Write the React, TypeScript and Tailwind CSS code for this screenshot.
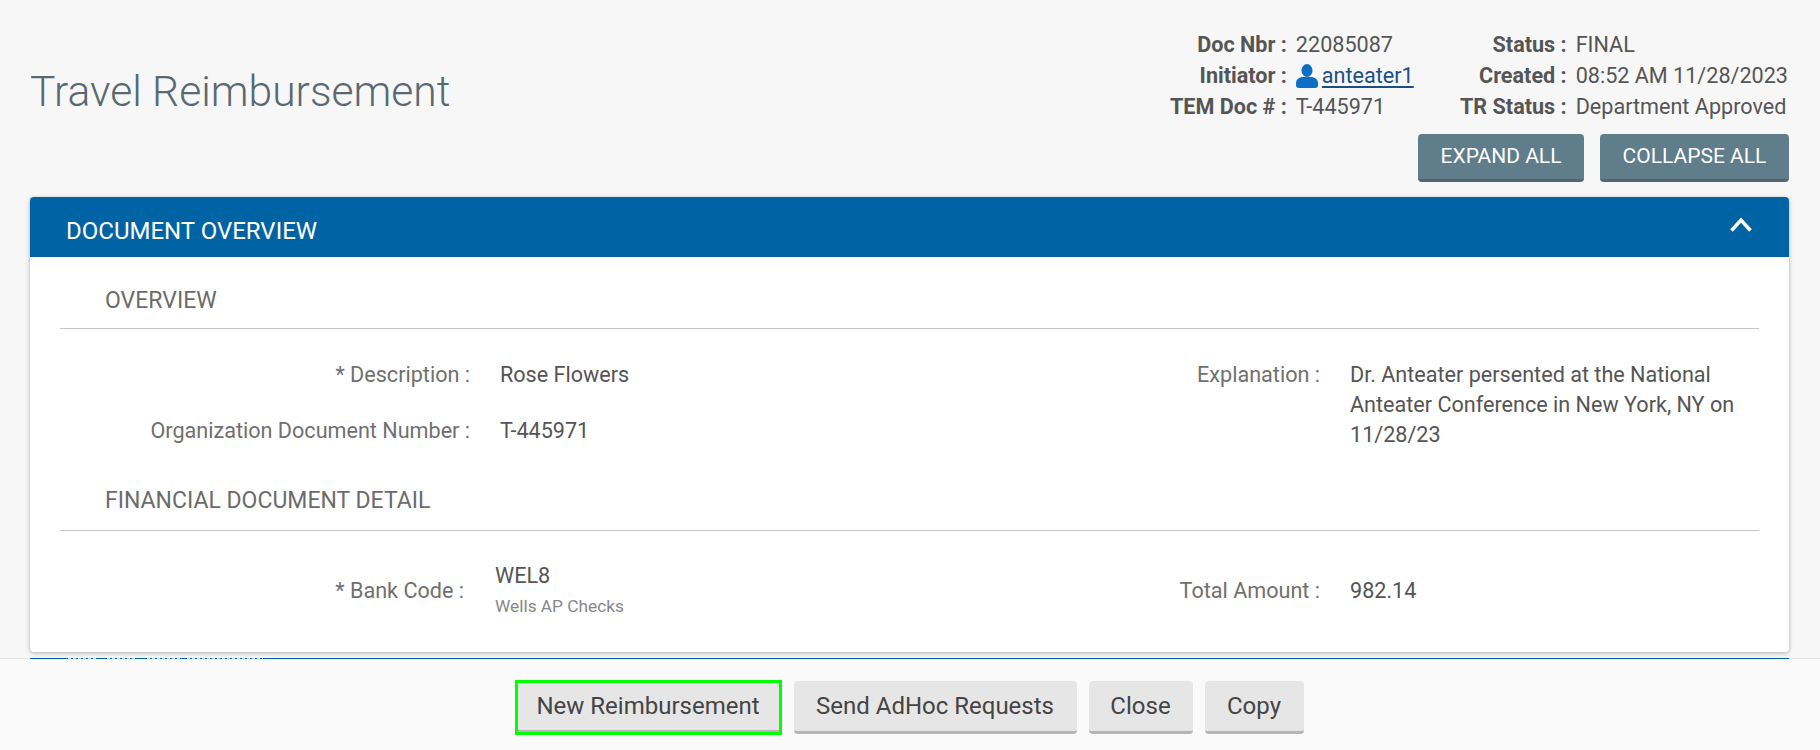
const labelCls = "text-right text-[21.6px] leading-[30px] text-[#707070] whitespace-nowrap"
const valueCls = "text-[21.6px] leading-[30px] text-[#555]"

function PersonIcon() {
  return (
    <svg viewBox="0 0 22 24" className="w-[22px] h-[24px] mr-[4px] shrink-0" fill="#0b70c4">
      <ellipse cx="11" cy="6.5" rx="5.5" ry="6.5" />
      <path d="M0 21v-2c0-4 4-6 7-6h8c3 0 7 2 7 6v2c0 2-1 3-3 3H3c-2 0-3-1-3-3z" />
    </svg>
  )
}

function MetaLabel({ children }: { children: string }) {
  return <div className="text-right font-bold text-[#555] whitespace-nowrap">{children}</div>
}

function SectionHeading({ title, className }: { title: string; className: string }) {
  return (
    <div className={`mx-[30px] flex items-center border-b border-[#c4c4c4] pl-[45px] text-[23px] text-[#6b6b6b] ${className}`}>
      {title}
    </div>
  )
}

function FooterButton({ label, width, focused }: { label: string; width: string; focused?: boolean }) {
  return (
    <button
      className={
        focused
          ? `${width} h-[55px] pb-[3px] bg-[#e6e6e6] border-[3px] border-[#00ff00] shadow-[inset_0_-2px_0_#b5b5b5] text-[24px] text-[#444]`
          : `${width} h-[53px] mt-px rounded-[4px] bg-[#e6e6e6] border-b-[3px] border-[#b5b5b5] text-[24px] text-[#444]`
      }
    >
      {label}
    </button>
  )
}

export default function App() {
  return (
    <div className="w-[1820px] h-[750px] overflow-hidden flex flex-col bg-[#f7f7f7] font-['Roboto',sans-serif]">
      <div className="h-[658px] shrink-0 pl-[30px] pr-[31px] overflow-hidden">
        {/* Page header */}
        <div className="h-[197px] flex justify-between">
          <h1 className="mt-[63px] text-[42.6px] leading-[56px] font-light text-[#5a6872]">Travel Reimbursement</h1>
          <div className="pt-[29px] flex flex-col items-end">
            <div className="flex pr-px text-[21.6px] leading-[31px] text-[#555]">
              <div className="grid grid-cols-[auto_auto] gap-x-[9px] w-[290px] justify-start">
                <MetaLabel>Doc Nbr :</MetaLabel>
                <div>22085087</div>
                <MetaLabel>Initiator :</MetaLabel>
                <div className="flex items-center">
                  <PersonIcon />
                  <a className="underline decoration-[2px] underline-offset-[3px] text-[#1d4f85]">anteater1</a>
                </div>
                <MetaLabel>TEM Doc # :</MetaLabel>
                <div>T-445971</div>
              </div>
              <div className="grid grid-cols-[auto_auto] gap-x-[9px]">
                <MetaLabel>Status :</MetaLabel>
                <div>FINAL</div>
                <MetaLabel>Created :</MetaLabel>
                <div>08:52 AM 11/28/2023</div>
                <MetaLabel>TR Status :</MetaLabel>
                <div>Department Approved</div>
              </div>
            </div>
            <div className="mt-[12px] flex gap-[16px]">
              <button className="h-[48px] w-[166px] pt-px rounded-[4px] bg-[#607d8b] border-b-[3px] border-[#4f6674] text-white text-[21px]">EXPAND ALL</button>
              <button className="h-[48px] w-[189px] pt-px rounded-[4px] bg-[#607d8b] border-b-[3px] border-[#4f6674] text-white text-[21px]">COLLAPSE ALL</button>
            </div>
          </div>
        </div>

        {/* Document overview panel */}
        <div className="h-[455px] rounded-[4px] bg-white shadow-[0_1px_4px_rgba(0,0,0,0.3)]">
          <div className="h-[60px] rounded-t-[4px] bg-[#0064a4] flex items-center justify-between pl-[36px] pr-[37px] text-white text-[24px]">
            <span className="pt-[8px]">DOCUMENT OVERVIEW</span>
            <svg viewBox="0 0 22 14" className="w-[22px] h-[15px] mb-[5px]" fill="none" stroke="white" strokeWidth="3.5">
              <path d="M1.5 13 11 2.5 20.5 13" />
            </svg>
          </div>

          <SectionHeading title="OVERVIEW" className="h-[72px] pt-[18px]" />
          <div className="grid grid-cols-[440px_440px_350px_1fr] grid-rows-[30px_60px] gap-x-[30px] pt-[31px] h-[137px]">
            <div className={labelCls}>* Description :</div>
            <div className={valueCls}>Rose Flowers</div>
            <div className={labelCls}>Explanation :</div>
            <div className={`${valueCls} row-span-2 pr-[20px]`}>
              Dr. Anteater persented at the National Anteater Conference in New York, NY on 11/28/23
            </div>
            <div className={`${labelCls} mt-[26px]`}>Organization Document Number :</div>
            <div className={`${valueCls} mt-[26px]`}>T-445971</div>
          </div>

          <SectionHeading title="FINANCIAL DOCUMENT DETAIL" className="h-[65px] pt-[7px]" />
          <div className="grid grid-cols-[434px_440px_356px_1fr] gap-x-[30px] pt-[30px]">
            <div className={`${labelCls} self-center`}>* Bank Code :</div>
            <div className="pl-px">
              <div className={valueCls}>WEL8</div>
              <div className="text-[17.3px] leading-[30px] text-[#888]">Wells AP Checks</div>
            </div>
            <div className={`${labelCls} self-center`}>Total Amount :</div>
            <div className={`${valueCls} self-center`}>982.14</div>
          </div>
        </div>
      </div>

      {/* Footer */}
      <div className="flex-1 bg-[#fafafa] border-t border-[#e4e4e4]">
        {/* sliver of the next panel's header, showing under the footer */}
        <div className="ml-[30px] mr-[31px] -mt-px h-px overflow-hidden bg-[#0064a4]">
          <svg width="300" height="1" className="block">
            <path d="M38 .5h29M77 .5h30M117 .5h33M157 .5h76" stroke="white" strokeOpacity="0.75" strokeDasharray="3 2" />
          </svg>
        </div>
        <div className="mt-[21px] pr-[2px] flex justify-center items-start gap-[12px]">
          <FooterButton label="New Reimbursement" width="w-[267px]" focused />
          <FooterButton label="Send AdHoc Requests" width="w-[283px]" />
          <FooterButton label="Close" width="w-[104px]" />
          <FooterButton label="Copy" width="w-[99px]" />
        </div>
      </div>
    </div>
  )
}
